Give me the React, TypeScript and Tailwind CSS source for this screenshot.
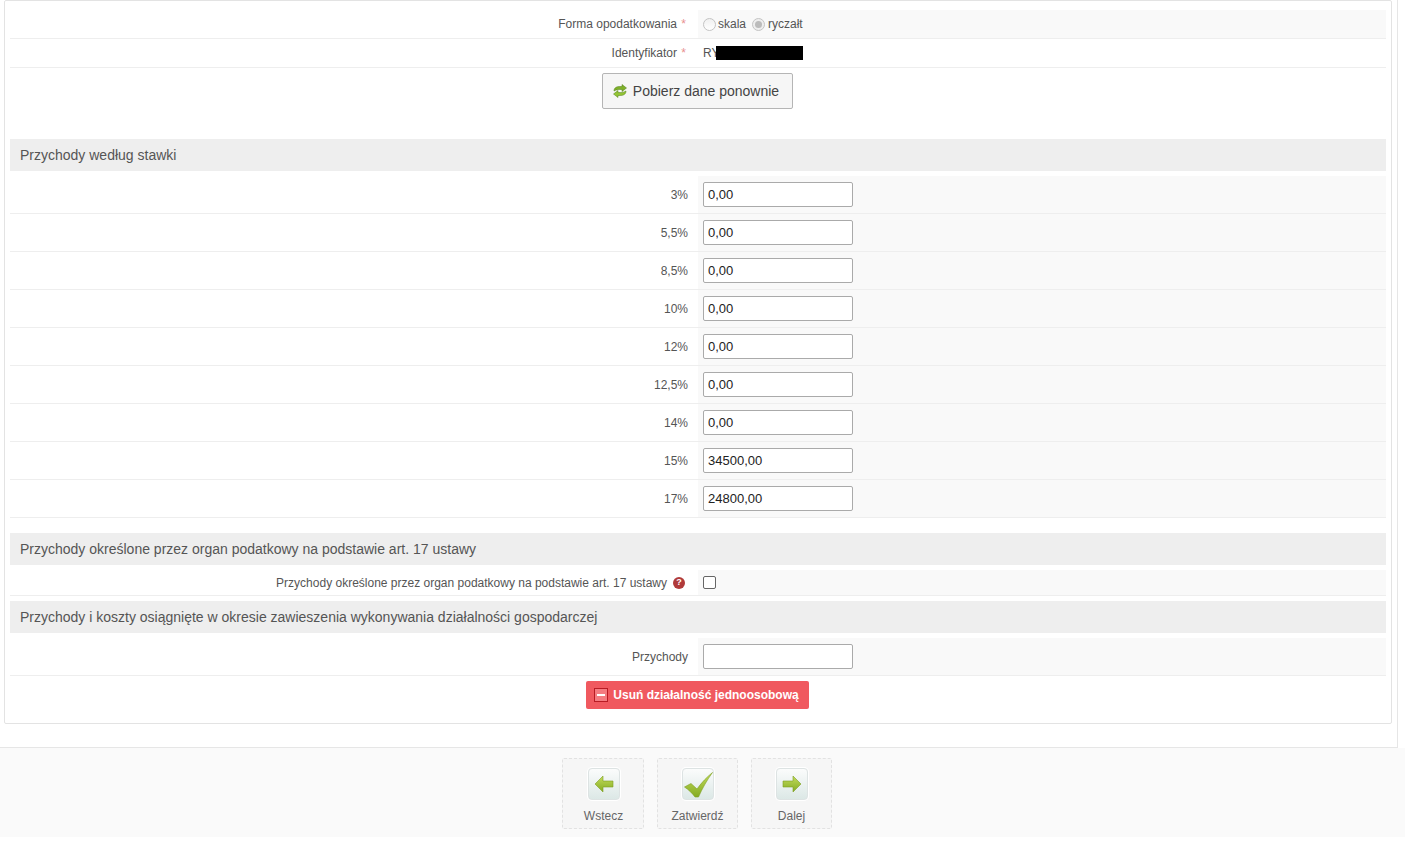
const rates = [
  { label: "3%", value: "0,00" },
  { label: "5,5%", value: "0,00" },
  { label: "8,5%", value: "0,00" },
  { label: "10%", value: "0,00" },
  { label: "12%", value: "0,00" },
  { label: "12,5%", value: "0,00" },
  { label: "14%", value: "0,00" },
  { label: "15%", value: "34500,00" },
  { label: "17%", value: "24800,00" },
];

function SectionTitle({ children, className = "" }: { children: React.ReactNode; className?: string }) {
  return (
    <div className={`flex h-[32px] items-center bg-[#eeeeee] pl-[10px] text-[14px] text-[#555555] ${className}`}>
      {children}
    </div>
  );
}

function Row({
  label,
  children,
  height,
  className = "",
}: {
  label: React.ReactNode;
  children: React.ReactNode;
  height: string;
  className?: string;
}) {
  return (
    <div className={`flex border-b border-[#eeeeee] ${height} ${className}`}>
      <div className="flex w-[688px] shrink-0 items-center justify-end pr-[10px] text-[12px] text-[#555555]">{label}</div>
      <div className="flex flex-1 items-center bg-[#f9f9f9] pl-[5px]">{children}</div>
    </div>
  );
}

function TextInput({ value }: { value: string }) {
  return (
    <input
      readOnly
      value={value}
      className="h-[25px] w-[150px] rounded-[2px] border border-[#aaaaaa] bg-white px-[4px] text-[13px] text-[#222222] outline-none"
    />
  );
}

function Required({ children }: { children: React.ReactNode }) {
  return (
    <span className="mr-[2px]">
      {children} <span className="ml-[1px] text-[#e89090]">*</span>
    </span>
  );
}

function RefreshIcon() {
  const arrow = "M1 7C1 3.500 4 2.500 6.500 2.500H9V0.500L13.500 4 9 7.500V5.500H6.500C4.500 5.500 3 6 1 7z";
  return (
    <svg width="14" height="14" viewBox="0 0 14 14" className="shrink-0">
      <path d={arrow} fill="#7fb02a" stroke="#4f7f12" strokeWidth="0.5" />
      <path d={arrow} transform="rotate(180 7 7)" fill="#93c435" stroke="#4f7f12" strokeWidth="0.5" />
    </svg>
  );
}

function NavIcon({ type }: { type: "back" | "check" | "next" }) {
  return (
    <div className="flex h-[32px] w-[32px] items-center justify-center rounded-[4px] border border-[#dde3e3] bg-gradient-to-b from-[#fbfcfc] to-[#dce8e6] shadow-[0_0_0_1px_#ffffff]">
      <svg width="0" height="0" className="absolute">
        <defs>
          <linearGradient id={`nav-${type}`} x1="0" y1="0" x2="0" y2="1">
            <stop offset="0" stopColor="#c3dc5c" />
            <stop offset="1" stopColor="#84ab22" />
          </linearGradient>
        </defs>
      </svg>
      {type === "back" && (
        <svg width="20" height="18" viewBox="0 0 20 18">
          <path d="M1 9 9 1v5h10v6H9v5z" fill="url(#nav-back)" stroke="#7da024" strokeWidth="0.6" />
        </svg>
      )}
      {type === "next" && (
        <svg width="20" height="18" viewBox="0 0 20 18">
          <path d="M19 9 11 1v5H1v6h10v5z" fill="url(#nav-next)" stroke="#7da024" strokeWidth="0.6" />
        </svg>
      )}
      {type === "check" && (
        <svg width="30" height="30" viewBox="0 0 30 30">
          <path d="M1.500 18 8 14.500 14 20C19 13 24 8 29.500 3.500 24 11 19 20 15.500 28H12C9 24 6 21 1.500 18z" fill="url(#nav-check)" stroke="#7da024" strokeWidth="0.6" />
        </svg>
      )}
    </div>
  );
}

function NavButton({ type, label, width }: { type: "back" | "check" | "next"; label: string; width: string }) {
  return (
    <button
      type="button"
      className={`flex h-[71px] flex-col items-center rounded-[2px] border border-dashed border-[#e2e2e2] bg-[#f6f6f6] pt-[9px] text-[12px] text-[#666666] ${width}`}
    >
      <NavIcon type={type} />
      <span className="mt-[7px]">{label}</span>
    </button>
  );
}

export default function App() {
  return (
    <div className="min-h-[842px] bg-white font-['Liberation_Sans',Arial,sans-serif]">
      <div className="h-[748px] w-[1398px] border-r border-b border-[#e6e6e6]">
        <div className="ml-[4px] h-[724px] w-[1388px] rounded-[2px] border border-[#e3e3e3] px-[5px] pt-[9px]">
          <Row height="h-[29px]" label={<Required>Forma opodatkowania</Required>}>
            <label className="flex items-center gap-[2px] text-[12px] text-[#555555]">
              <span className="h-[13px] w-[13px] rounded-full border border-[#c4c4c4] bg-gradient-to-b from-[#f0f0f0] to-white" />
              skala
            </label>
            <label className="ml-[6px] flex items-center gap-[3px] text-[12px] text-[#555555]">
              <span className="flex h-[13px] w-[13px] items-center justify-center rounded-full border border-[#c4c4c4] bg-[#eeeeee]">
                <span className="h-[7px] w-[7px] rounded-full bg-[#bbbbbb]" />
              </span>
              ryczałt
            </label>
          </Row>
          <Row height="h-[29px]" className="[&>div:last-child]:bg-white" label={<Required>Identyfikator</Required>}>
            <span className="text-[12px] text-[#555555]">RY</span>
            <span className="ml-[-3px] h-[14px] w-[87px] bg-black" />
          </Row>
          <div className="flex h-[71px] justify-center pt-[5px] pr-[2px]">
            <button
              type="button"
              className="flex h-[36px] w-[191px] items-center justify-center gap-[6px] rounded-[2px] border border-[#b5b5b5] bg-[#f6f6f6] pr-[2px] text-[14px] text-[#444444]"
            >
              <RefreshIcon />
              Pobierz dane ponownie
            </button>
          </div>

          <SectionTitle className="mb-[5px]">Przychody według stawki</SectionTitle>
          {rates.map((rate) => (
            <Row key={rate.label} height="h-[38px]" label={rate.label}>
              <TextInput value={rate.value} />
            </Row>
          ))}

          <SectionTitle className="mt-[15px] mb-[5px]">
            Przychody określone przez organ podatkowy na podstawie art. 17 ustawy
          </SectionTitle>
          <Row
            height="h-[26px]"
            label={
              <span className="mr-[3px] flex items-center gap-[6px]">
                Przychody określone przez organ podatkowy na podstawie art. 17 ustawy
                <span className="flex h-[12px] w-[12px] items-center justify-center rounded-full bg-[#b03a3a] text-[9px] leading-none font-bold text-white">
                  ?
                </span>
              </span>
            }
          >
            <input
              type="checkbox"
              readOnly
              className="h-[13px] w-[13px] appearance-none rounded-[2px] border border-[#666666] bg-white"
            />
          </Row>

          <SectionTitle className="mt-[5px] mb-[5px]">
            Przychody i koszty osiągnięte w okresie zawieszenia wykonywania działalności gospodarczej
          </SectionTitle>
          <Row height="h-[38px]" label="Przychody">
            <TextInput value="" />
          </Row>

          <div className="flex justify-center pt-[5px] pr-[2px]">
            <button
              type="button"
              className="flex h-[28px] w-[223px] items-center justify-center gap-[5px] rounded-[2px] bg-[#f0595f] pr-[1px] text-[12px] font-bold text-white"
            >
              <span className="flex h-[14px] w-[14px] items-center justify-center border border-[#b81c24] bg-[#f47b80]">
                <span className="h-[2px] w-[8px] bg-white" />
              </span>
              Usuń działalność jednoosobową
            </button>
          </div>
        </div>
      </div>
      <div className="flex h-[89px] w-full items-start bg-[#fafafa] pt-[10px]">
        <div className="flex w-[1394px] justify-center gap-[13px]">
          <NavButton type="back" label="Wstecz" width="w-[82px] pl-[1px]" />
          <NavButton type="check" label="Zatwierdź" width="w-[81px]" />
          <NavButton type="next" label="Dalej" width="w-[81px]" />
        </div>
      </div>
    </div>
  );
}
